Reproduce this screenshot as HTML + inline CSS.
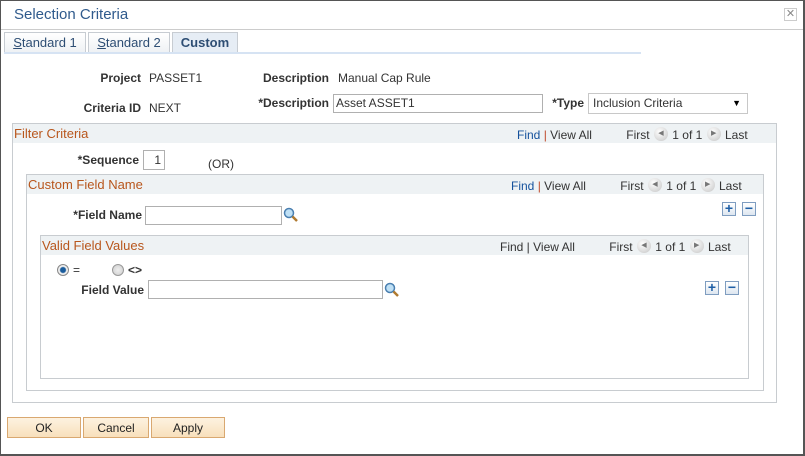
<!DOCTYPE html>
<html><head><meta charset="utf-8"><style>
body{margin:0;width:805px;height:456px;overflow:hidden;font-family:"Liberation Sans",Arial,sans-serif;font-size:12px;color:#333;background:#fff;position:relative}
.a{position:absolute;white-space:nowrap}
.lbl{font-weight:bold;color:#333;text-align:right}
.inp{position:absolute;border:1px solid #b0b0b0;background:#fff;box-sizing:border-box}
.box{position:absolute;border:1px solid #c8ccd0;box-sizing:border-box}
.hdr{position:absolute;left:0;right:0;top:0;height:19px;background:#eef2f4}
.ttl{position:absolute;left:1px;top:2px;color:#b8561c;font-size:13px}
.nav{position:absolute;top:4px;font-size:12px;color:#333}
.nav .f{color:#14519c}.nav .s{color:#c04a2a}
.arr{display:inline-block;width:14px;height:14px;border-radius:50%;background:radial-gradient(circle at 40% 35%,#fff,#d6d6d6 70%,#bbb);vertical-align:0;position:relative;top:-4px;font-size:7px;color:#777;text-align:center;line-height:14px;margin:0 1px}
.pm{position:absolute;width:14px;height:14px;border:1px solid #7f9dc0;box-sizing:border-box;background:linear-gradient(#fff,#dde6f0);color:#1f5fa6;font-weight:bold;text-align:center;line-height:11px;font-size:14px}
.btn{position:absolute;top:417px;height:21px;border:1px solid #d9a870;box-sizing:border-box;background:linear-gradient(#fdf2e0,#f8e0bc);text-align:center;line-height:20px;font-size:12px;color:#222}
.tab{position:absolute;top:32px;height:21px;border:1px solid #c7ccd2;border-bottom:none;box-sizing:border-box;background:linear-gradient(#fff,#eef1f4);text-align:center;line-height:20px;font-size:13px;color:#2e4e74}
</style></head><body>
<div class="a" style="left:0;top:0;width:805px;height:456px;border:1px solid #555;border-width:1px 2px 2px 1px;box-sizing:border-box"></div>
<div class="a" style="left:14px;top:6px;font-size:15px;color:#2f5a8c">Selection Criteria</div>
<div class="a" style="left:784px;top:8px;width:13px;height:13px;border:1px solid #ccc;box-sizing:border-box;color:#888;font-size:11px;line-height:11px;text-align:center">✕</div>
<div class="a" style="left:1px;top:29px;width:802px;height:1px;background:#ccc"></div>
<div class="tab" style="left:4px;width:82px"><u>S</u>tandard 1</div>
<div class="tab" style="left:88px;width:82px"><u>S</u>tandard 2</div>
<div class="tab" style="left:172px;width:66px;background:#e6edf5;font-weight:bold;color:#2e4e74">Custom</div>
<div class="a" style="left:4px;top:52px;width:637px;height:2px;background:#d6e3f3"></div>

<div class="a lbl" style="right:664px;top:71px">Project</div>
<div class="a" style="left:149px;top:71px">PASSET1</div>
<div class="a lbl" style="right:476px;top:71px">Description</div>
<div class="a" style="left:338px;top:71px">Manual Cap Rule</div>
<div class="a lbl" style="right:664px;top:101px">Criteria ID</div>
<div class="a" style="left:149px;top:101px">NEXT</div>
<div class="a lbl" style="right:476px;top:96px">*Description</div>
<div class="inp" style="left:333px;top:94px;width:210px;height:19px;padding:1px 2px">Asset ASSET1</div>
<div class="a lbl" style="right:221px;top:96px">*Type</div>
<div class="inp" style="left:588px;top:93px;width:160px;height:21px;border-color:#c8c8c8;padding:2px 4px">Inclusion Criteria<span style="position:absolute;right:6px;top:4px;font-size:9px;color:#000">▼</span></div>

<div class="box" style="left:12px;top:123px;width:765px;height:280px">
 <div class="hdr"></div><div class="ttl">Filter Criteria</div>
 <div class="nav" style="left:504px"><span class="f">Find</span> <span class="s">|</span> View All <span style="display:inline-block;width:31px"></span>First <span class="arr">◀</span> 1 of 1 <span class="arr">▶</span> Last</div>
</div>
<div class="a lbl" style="right:666px;top:153px">*Sequence</div>
<div class="inp" style="left:143px;top:150px;width:22px;height:20px;text-align:right;padding:2px 3px">1</div>
<div class="a" style="left:208px;top:157px">(OR)</div>

<div class="box" style="left:26px;top:174px;width:738px;height:217px">
 <div class="hdr"></div><div class="ttl">Custom Field Name</div>
 <div class="nav" style="left:484px"><span class="f">Find</span> <span class="s">|</span> View All <span style="display:inline-block;width:31px"></span>First <span class="arr">◀</span> 1 of 1 <span class="arr">▶</span> Last</div>
</div>
<div class="pm" style="left:722px;top:202px">+</div><div class="pm" style="left:742px;top:202px">−</div>
<div class="a lbl" style="right:663px;top:208px">*Field Name</div>
<div class="inp" style="left:145px;top:206px;width:137px;height:19px"></div>
<svg class="a" style="left:283px;top:207px" width="15" height="15"><circle cx="6" cy="6" r="4.5" fill="#bfe0f5" stroke="#4a7fb0" stroke-width="1.5"/><line x1="9.5" y1="9.5" x2="14" y2="14" stroke="#b07a30" stroke-width="2.5"/></svg>

<div class="box" style="left:40px;top:235px;width:709px;height:144px">
 <div class="hdr"></div><div class="ttl">Valid Field Values</div>
 <div class="nav" style="left:459px"><span class="f" style="color:#333">Find</span> | View All <span style="display:inline-block;width:31px"></span>First <span class="arr">◀</span> 1 of 1 <span class="arr">▶</span> Last</div>
</div>
<div class="a" style="left:57px;top:264px;width:12px;height:12px;border-radius:50%;border:1px solid #888;box-sizing:border-box;background:radial-gradient(circle,#1a5c9c 2.5px,#eee 3.5px)"></div>
<div class="a" style="left:73px;top:263px">=</div>
<div class="a" style="left:112px;top:264px;width:12px;height:12px;border-radius:50%;border:1px solid #999;box-sizing:border-box;background:radial-gradient(circle,#eee,#ccc)"></div>
<div class="a" style="left:128px;top:263px;font-weight:bold">&lt;&gt;</div>
<div class="a lbl" style="right:661px;top:283px">Field Value</div>
<div class="inp" style="left:148px;top:280px;width:235px;height:19px"></div>
<svg class="a" style="left:384px;top:282px" width="15" height="15"><circle cx="6" cy="6" r="4.5" fill="#bfe0f5" stroke="#4a7fb0" stroke-width="1.5"/><line x1="9.5" y1="9.5" x2="14" y2="14" stroke="#b07a30" stroke-width="2.5"/></svg>
<div class="pm" style="left:705px;top:281px">+</div><div class="pm" style="left:725px;top:281px">−</div>

<div class="btn" style="left:7px;width:74px">OK</div>
<div class="btn" style="left:83px;width:66px">Cancel</div>
<div class="btn" style="left:151px;width:74px">Apply</div>
</body></html>
